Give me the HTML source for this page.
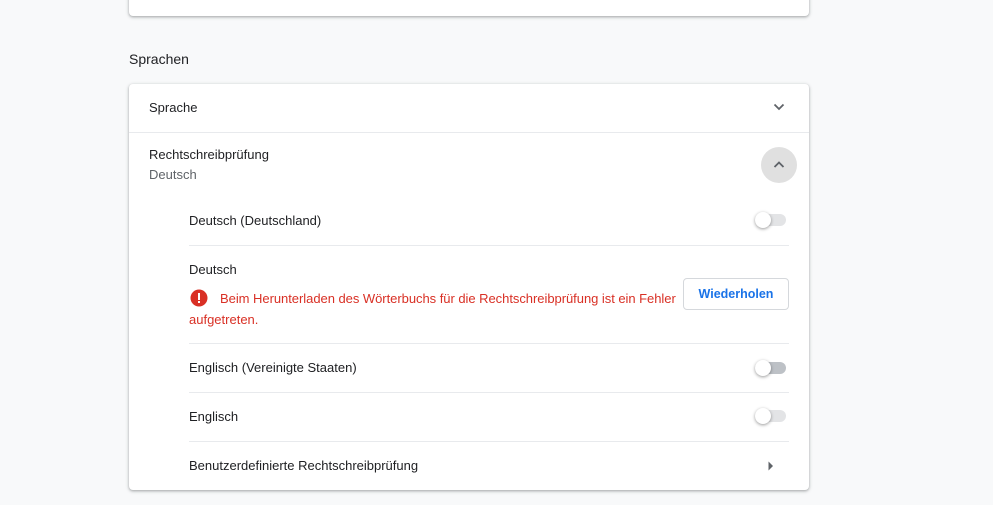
<!DOCTYPE html>
<html><head><meta charset="utf-8"><style>
*{margin:0;padding:0;box-sizing:border-box}
body{width:993px;height:505px;background:#f8f9fa;font-family:"Liberation Sans",Roboto,sans-serif;color:#202124;position:relative;overflow:hidden;font-size:13px}
.card{position:absolute;left:129px;width:680px;background:#fff;border-radius:4px;box-shadow:0 1px 2px rgba(60,64,67,.3),0 1px 3px 1px rgba(60,64,67,.15)}
.t{position:absolute;white-space:nowrap;line-height:16px}
.hr{position:absolute;height:1px;background:#e8eaed}
.tog{position:absolute;left:755px;width:31px;height:12px;border-radius:6px;background:#e3e4e6}
.tog::after{content:"";position:absolute;left:0px;top:-2px;width:16px;height:16px;border-radius:50%;background:#fff;box-shadow:0 1px 3px rgba(0,0,0,.4)}
</style></head><body>
<div class="card" style="top:-10px;height:26px"></div>
<div class="t" style="left:129px;top:51px;font-size:14px;color:#202124">Sprachen</div>
<div class="card" style="top:84px;height:406px"></div>
<div class="t" style="left:149px;top:100px">Sprache</div>
<svg style="position:absolute;left:773px;top:103px" width="12" height="8"><path d="M1.5 1.5 L6 6 L10.5 1.5" stroke="#5f6368" stroke-width="1.8" fill="none"/></svg>
<div class="hr" style="left:129px;width:680px;top:132px"></div>
<div class="t" style="left:149px;top:147px">Rechtschreibprüfung</div>
<div class="t" style="left:149px;top:167px;color:#5f6368">Deutsch</div>
<div style="position:absolute;left:761px;top:147px;width:36px;height:36px;border-radius:50%;background:#e0e0e0"></div>
<svg style="position:absolute;left:773px;top:161px" width="12" height="8"><path d="M1.5 6 L6 1.5 L10.5 6" stroke="#5f6368" stroke-width="1.8" fill="none"/></svg>
<div class="t" style="left:189px;top:213px">Deutsch (Deutschland)</div>
<div class="tog" style="top:214px"></div>
<div class="hr" style="left:189px;width:600px;top:245px"></div>
<div class="t" style="left:189px;top:262px">Deutsch</div>
<svg style="position:absolute;left:190px;top:289px" width="18" height="18"><circle cx="9" cy="9" r="8.5" fill="#d93025"/><rect x="8" y="4" width="2" height="7" fill="#fff"/><rect x="8" y="12" width="2" height="2" fill="#fff"/></svg>
<div class="t" style="left:220px;top:291px;color:#d93025;letter-spacing:-0.04px">Beim Herunterladen des Wörterbuchs für die Rechtschreibprüfung ist ein Fehler</div>
<div class="t" style="left:189px;top:312px;color:#d93025">aufgetreten.</div>
<div style="position:absolute;left:683px;top:278px;width:106px;height:32px;border:1px solid #d5d8dc;border-radius:4px;color:#1a73e8;font-weight:bold;font-size:12.5px;text-align:center;line-height:30px">Wiederholen</div>
<div class="hr" style="left:189px;width:600px;top:343px"></div>
<div class="t" style="left:189px;top:360px">Englisch (Vereinigte Staaten)</div>
<div class="tog" style="top:362px;background:#bdc1c6"></div>
<div class="hr" style="left:189px;width:600px;top:392px"></div>
<div class="t" style="left:189px;top:409px">Englisch</div>
<div class="tog" style="top:410px"></div>
<div class="hr" style="left:189px;width:600px;top:441px"></div>
<div class="t" style="left:189px;top:458px">Benutzerdefinierte Rechtschreibprüfung</div>
<svg style="position:absolute;left:768px;top:461px" width="6" height="10"><path d="M0.5 0.5 L5 5 L0.5 9.5Z" fill="#5f6368"/></svg>
</body></html>
